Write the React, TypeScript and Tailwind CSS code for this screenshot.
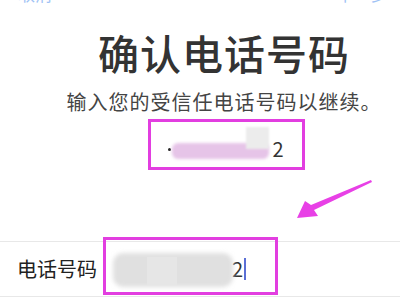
export default function App() {
  return (
    <div
      className="relative h-[300px] w-[400px] overflow-hidden bg-white"
      style={{ fontFamily: '"Noto Sans CJK SC", "Noto Sans", sans-serif' }}
    >
      {/* nav bar, mostly scrolled off the top */}
      <div className="-mt-[22px] flex h-[24px] items-end justify-between pl-[18px] pr-[12px] text-[17px] leading-none text-[#9fc3f5]">
        <span>取消</span>
        <span>下一步</span>
      </div>

      <div className="flex flex-col items-center pl-[48px]">
        <h1 className="mt-[30px] text-[41px] font-medium leading-none tracking-[1px] text-[#333]">
          确认电话号码
        </h1>
        <p className="mt-[19px] text-[20px] leading-none tracking-[1px] text-[#444]">
          输入您的受信任电话号码以继续。
        </p>

        <div className="mt-[7px] ml-[4px] flex h-[51px] w-[157px] items-center border-[3px] border-[#e23ee0] pl-[17px] pt-[9px]">
          <span className="h-[3px] w-[3px] rounded-full bg-[#222]" />
          <div className="relative h-[24px] w-[99px]">
            <div className="absolute left-[1px] top-[6px] h-[16px] w-[97px] rounded-[6px] bg-[#e6c4e8] blur-[1.5px]" />
            <div className="absolute left-[75px] top-[-10px] h-[22px] w-[23px] bg-[#ececec] blur-[1px]" />
          </div>
          <span className="ml-[3px] text-[20px] leading-none text-[#333]">2</span>
        </div>
      </div>

      {/* annotation arrow */}
      <svg className="pointer-events-none absolute inset-0" width="400" height="300" viewBox="0 0 400 300">
        <polygon
          points="371,180 311,205 305,201 297,218 318,216 314,210 372,182"
          fill="#e840e6"
        />
      </svg>

      <div className="relative mt-[71px] flex h-[56px] items-center border-y border-[#e8e8e8]">
        <span className="ml-[17px] text-[20px] leading-none text-[#222]">电话号码</span>
        <div className="relative ml-[16px] h-[36px] w-[122px]">
          <div className="absolute left-[0px] top-[2px] h-[34px] w-[120px] rounded-[10px] bg-[#e0e0e0] blur-[2px]" />
          <div className="absolute left-[34px] top-[6px] h-[28px] w-[30px] bg-[#e6e6e6]" />
        </div>
        <span className="ml-[-3px] text-[20px] leading-none text-[#333]">2</span>
        <span className="ml-[1px] h-[22px] w-[2px] bg-[#5a6fd6]" />
        <div className="pointer-events-none absolute left-[103px] top-[-5px] h-[58px] w-[175px] border-[3px] border-[#e23ee0]" />
      </div>
    </div>
  );
}
